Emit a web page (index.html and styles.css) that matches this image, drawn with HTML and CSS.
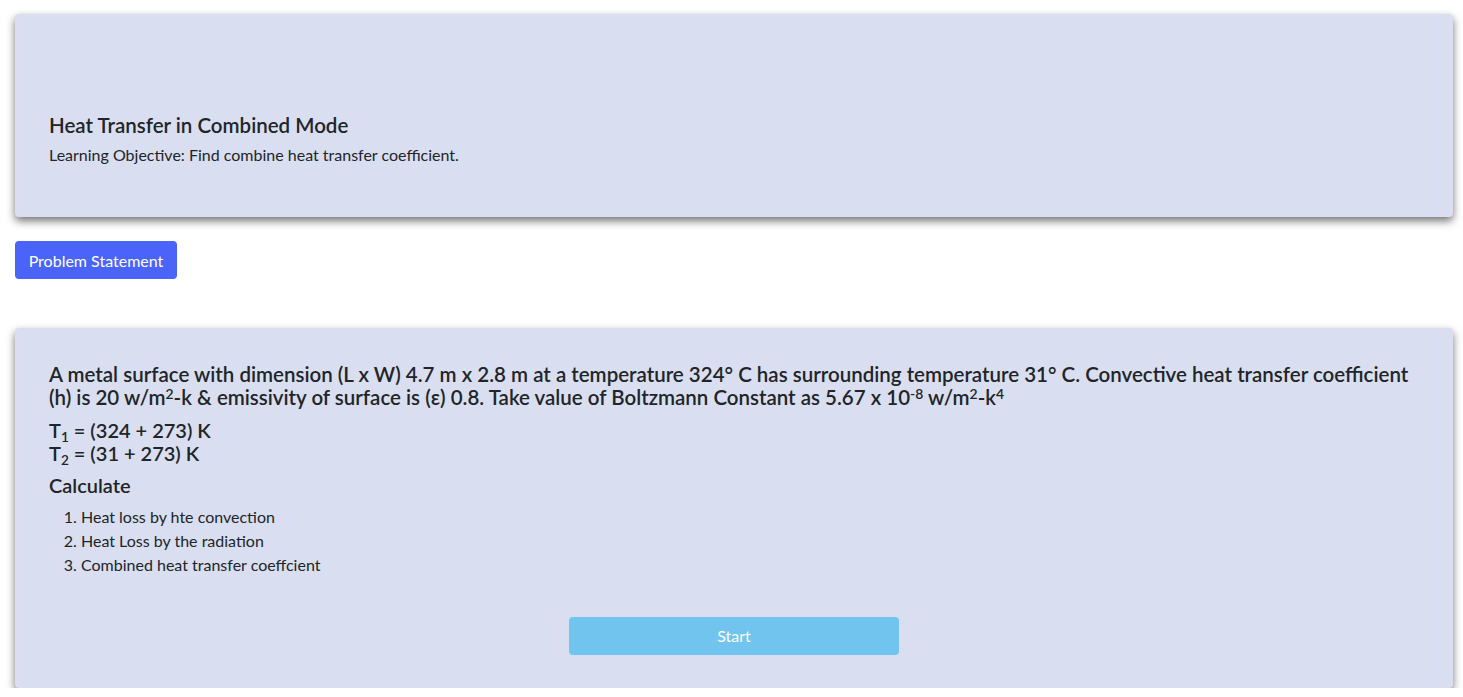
FILE: index.html
```html
<!DOCTYPE html>
<html lang="en">
<head>
<meta charset="utf-8">
<title>Heat Transfer in Combined Mode</title>
<link rel="stylesheet" href="styles.css">
</head>
<body>
<main class="page">
  <section class="card intro">
    <h1 class="title">Heat Transfer in Combined Mode</h1>
    <p class="objective">Learning Objective: Find combine heat transfer coefficient.</p>
  </section>

  <div class="tabs">
    <button class="btn btn-primary">Problem Statement</button>
  </div>

  <section class="card problem">
    <p class="statement">A metal surface with dimension (L x W) 4.7 m x 2.8 m at a temperature 324° C has surrounding temperature 31° C. Convective heat transfer coefficient (h) is 20 w/m<sup>2</sup>-k &amp; emissivity of surface is (ε) 0.8. Take value of Boltzmann Constant as 5.67 x 10<sup>-8</sup> w/m<sup>2</sup>-k<sup>4</sup></p>
    <p class="temps">T<sub>1</sub> = (324 + 273) K<br>T<sub>2</sub> = (31 + 273) K</p>
    <p class="calc">Calculate</p>
    <ol class="tasks">
      <li>Heat loss by hte convection</li>
      <li>Heat Loss by the radiation</li>
      <li>Combined heat transfer coeffcient</li>
    </ol>
    <div class="actions">
      <button class="btn btn-start">Start</button>
    </div>
  </section>
</main>
</body>
</html>
```

FILE: styles.css
```css
* { box-sizing: border-box; }

html, body {
  margin: 0;
  padding: 0;
  background: #ffffff;
}

body {
  font-family: Lato, "Noto Sans", sans-serif;
  color: #212529;
}

.page {
  padding: 14px 10px 0 15px;
  display: flex;
  flex-direction: column;
}

.card {
  background: #d9dff0;
  border-radius: 4px;
  box-shadow: 0 4px 8px rgba(0, 0, 0, 0.55);
}

.intro {
  height: 203px;
  padding: 99px 34px 0 34px;
}

.title {
  margin: 0;
  font-size: 20.5px;
  font-weight: 600;
  line-height: 24px;
}

.objective {
  margin: 8px 0 0 0;
  font-size: 16px;
  line-height: 20px;
}

.tabs {
  margin-top: 24px;
  display: flex;
}

.btn {
  font-family: inherit;
  border: none;
  border-radius: 4px;
  color: #ffffff;
  cursor: pointer;
}

.btn-primary {
  background: #4a63f8;
  height: 38px;
  width: 162px;
  font-size: 16px;
  padding: 0;
}

.problem {
  margin-top: 49px;
  height: 360px;
  padding: 35px 34px 33px 34px;
  display: flex;
  flex-direction: column;
}

.statement {
  margin: 0;
  font-size: 20.5px;
  font-weight: 600;
  line-height: 23px;
}

sup, sub {
  font-size: 0.68em;
  line-height: 0;
  position: relative;
  vertical-align: baseline;
}
sup { top: -0.45em; }
sub { bottom: -0.3em; }

.temps {
  margin: 10px 0 0 0;
  font-size: 20px;
  font-weight: 600;
  line-height: 23px;
}

.calc {
  margin: 9px 0 0 0;
  font-size: 20px;
  font-weight: 600;
  line-height: 23px;
}

.tasks {
  margin: 8px 0 0 0;
  padding-left: 32px;
  font-size: 16px;
  line-height: 24px;
}

.actions {
  margin-top: auto;
  display: flex;
  justify-content: center;
}

.btn-start {
  background: #70c4ee;
  width: 330px;
  height: 38px;
  font-size: 16px;
  padding: 0 0 1px 0;
}
```
